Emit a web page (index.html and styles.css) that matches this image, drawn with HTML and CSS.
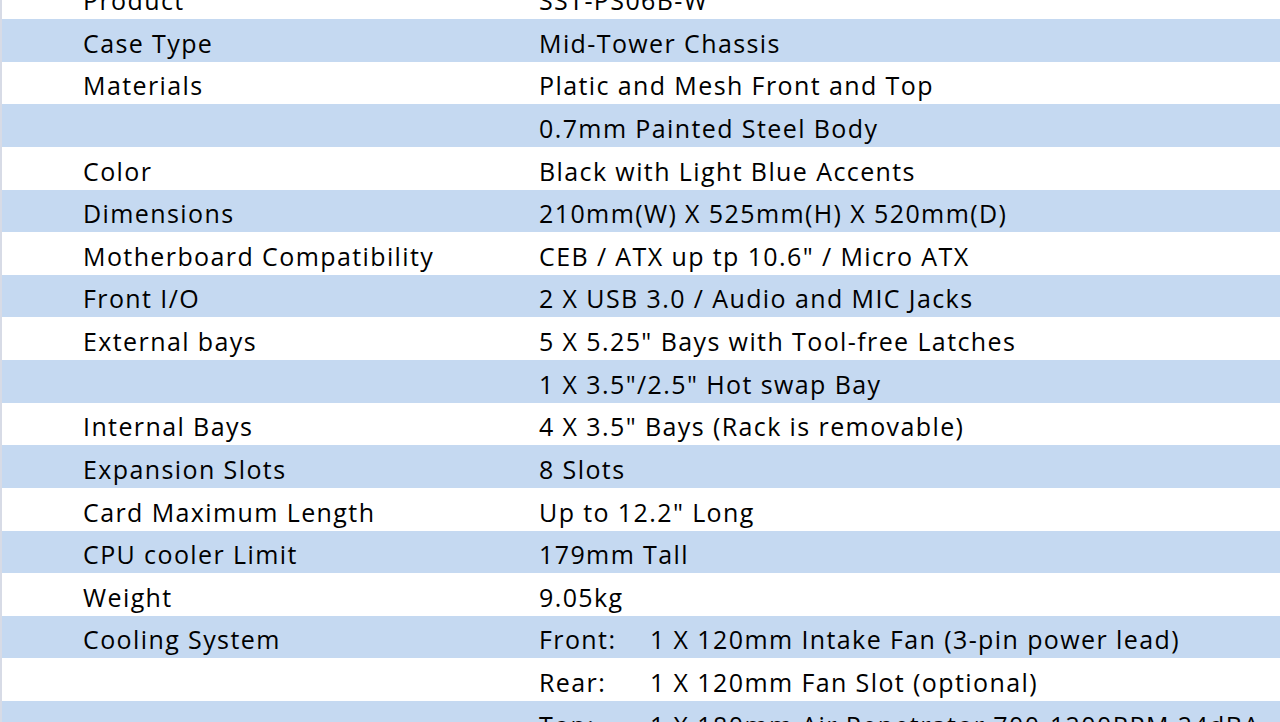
FILE: index.html
```html
<!DOCTYPE html>
<html>
<head>
<meta charset="utf-8">
<link rel="stylesheet" href="styles.css">
</head>
<body>
<div class="sheet">
  <div class="row"><div class="label">Product</div><div class="value">SST-PS06B-W</div></div>
  <div class="row alt"><div class="label">Case Type</div><div class="value">Mid-Tower Chassis</div></div>
  <div class="row"><div class="label">Materials</div><div class="value">Platic and Mesh Front and Top</div></div>
  <div class="row alt"><div class="label"></div><div class="value">0.7mm Painted Steel Body</div></div>
  <div class="row"><div class="label">Color</div><div class="value">Black with Light Blue Accents</div></div>
  <div class="row alt"><div class="label">Dimensions</div><div class="value">210mm(W) X 525mm(H) X 520mm(D)</div></div>
  <div class="row"><div class="label">Motherboard Compatibility</div><div class="value">CEB / ATX up tp 10.6" / Micro ATX</div></div>
  <div class="row alt"><div class="label">Front I/O</div><div class="value">2 X USB 3.0 / Audio and MIC Jacks</div></div>
  <div class="row"><div class="label">External bays</div><div class="value">5 X 5.25" Bays with Tool-free Latches</div></div>
  <div class="row alt"><div class="label"></div><div class="value">1 X 3.5"/2.5" Hot swap Bay</div></div>
  <div class="row"><div class="label">Internal Bays</div><div class="value">4 X 3.5" Bays (Rack is removable)</div></div>
  <div class="row alt"><div class="label">Expansion Slots</div><div class="value">8 Slots</div></div>
  <div class="row"><div class="label">Card Maximum Length</div><div class="value">Up to 12.2" Long</div></div>
  <div class="row alt"><div class="label">CPU cooler Limit</div><div class="value">179mm Tall</div></div>
  <div class="row"><div class="label">Weight</div><div class="value">9.05kg</div></div>
  <div class="row alt"><div class="label">Cooling System</div><div class="value"><span class="sub">Front:</span>1 X 120mm Intake Fan (3-pin power lead)</div></div>
  <div class="row"><div class="label"></div><div class="value"><span class="sub">Rear:</span>1 X 120mm Fan Slot (optional)</div></div>
  <div class="row alt"><div class="label"></div><div class="value"><span class="sub">Top:</span>1 X 180mm Air Penetrator 700-1200RPM 24dBA</div></div>
</div>
</body>
</html>
```
FILE: styles.css
```css
html, body {
  margin: 0;
  padding: 0;
  background: #ffffff;
  overflow: hidden;
}
.sheet {
  margin-top: -23.6px;
  border-left: 2px solid #d7dbe6;
  font-family: "Open Sans", "Liberation Sans", sans-serif;
  font-size: 25px;
  letter-spacing: 1.4px;
  color: #000000;
}
.row {
  display: grid;
  grid-template-columns: 537px 1fr;
  height: 42.625px;
  align-items: end;
  background: #ffffff;
}
.row.alt {
  background: #c5d9f1;
}
.label {
  padding-left: 81px;
  line-height: 30px;
  padding-bottom: 4px;
  white-space: nowrap;
}
.value {
  line-height: 30px;
  padding-bottom: 4px;
  white-space: nowrap;
}
.sub {
  display: inline-block;
  width: 111px;
}
```
